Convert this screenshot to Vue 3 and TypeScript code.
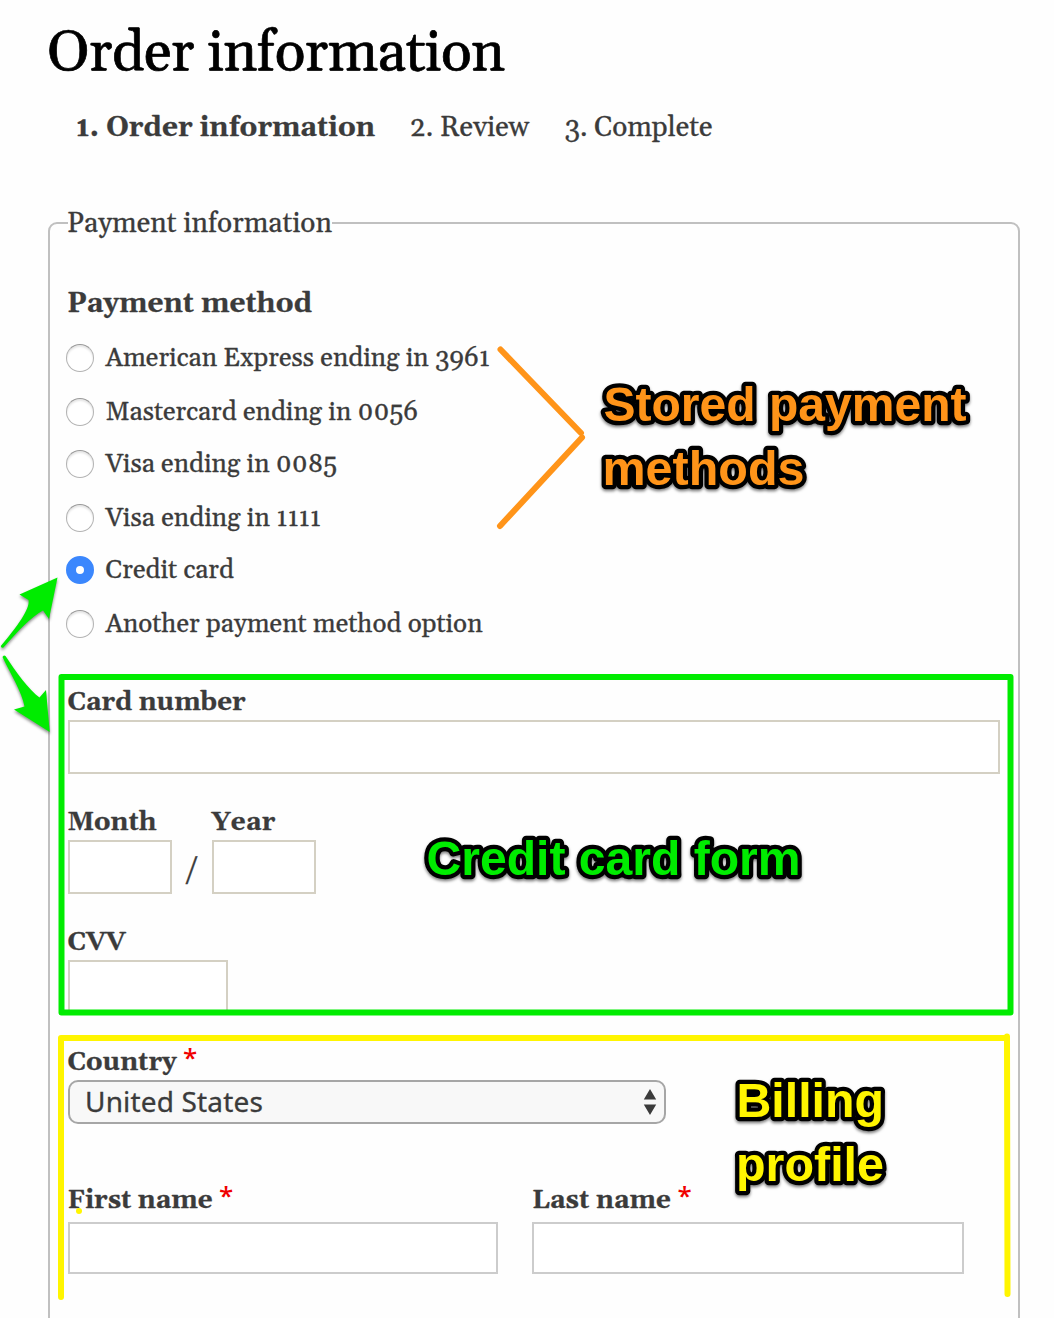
<script setup lang="ts">
import type { Directive } from 'vue'

interface Step { label: string; width: number; active?: boolean }
interface Method { label: string; width: number; checked?: boolean }

const steps: Step[] = [
  { label: '1. Order information', width: 299, active: true },
  { label: '2. Review', width: 119.5 },
  { label: '3. Complete', width: 148 },
]

const methods: Method[] = [
  { label: 'American Express ending in 3961', width: 384.5 },
  { label: 'Mastercard ending in 0056', width: 312.5 },
  { label: 'Visa ending in 0085', width: 231.5 },
  { label: 'Visa ending in 1111', width: 215.5 },
  { label: 'Credit card', width: 128.5, checked: true },
  { label: 'Another payment method option', width: 377 },
]

// Tracks a run of text out (or in) until it has the given width.
const vFit: Directive<HTMLElement, number> = {
  mounted(el, { value }) {
    const natural = el.getBoundingClientRect().width
    const count = (el.textContent ?? '').length
    el.style.letterSpacing = `${(value - natural) / count}px`
  },
}
</script>

<template>
  <main class="page">
    <h1><span v-fit="457.5">Order information</span></h1>
    <nav class="steps">
      <span v-for="s in steps" :key="s.label" v-fit="s.width" :class="{ active: s.active }">{{ s.label }}</span>
    </nav>

    <section class="fieldset">
      <div class="legend"><span v-fit="265">Payment information</span></div>
      <h2><span v-fit="245">Payment method</span></h2>
      <div class="methods">
        <label v-for="m in methods" :key="m.label" class="method">
          <i class="radio" :class="{ on: m.checked }"></i>
          <span v-fit="m.width">{{ m.label }}</span>
        </label>
      </div>

      <div class="field">
        <div class="label"><span v-fit="178">Card number</span></div>
        <div class="box number"></div>
      </div>
      <div class="row expiry">
        <div class="field">
          <div class="label"><span v-fit="89">Month</span></div>
          <div class="box short"></div>
        </div>
        <div class="slash"><span>/</span></div>
        <div class="field">
          <div class="label"><span v-fit="64">Year</span></div>
          <div class="box short"></div>
        </div>
      </div>
      <div class="field">
        <div class="label"><span v-fit="58">CVV</span></div>
        <div class="box cvv"></div>
      </div>

      <div class="field country">
        <div class="label"><span v-fit="109">Country</span><b class="req">*</b></div>
        <div class="select">
          <span v-fit="178">United States</span>
          <svg width="14" height="26" viewBox="0 0 14 26"><path d="M7 0l6.200 10.500H.8zM7 26l6.200-10.500H.8z" fill="#3b3b3b" /></svg>
        </div>
      </div>
      <div class="row names">
        <div class="field first">
          <div class="label"><span v-fit="145">First name</span><b class="req">*</b></div>
          <div class="box grey"></div>
        </div>
        <div class="field last">
          <div class="label"><span v-fit="139">Last name</span><b class="req">*</b></div>
          <div class="box grey"></div>
        </div>
      </div>
    </section>

    <svg class="notes" width="1054" height="1318" viewBox="0 0 1054 1318">
      <g fill="none" stroke-width="6" stroke-linecap="round" stroke-linejoin="round">
        <path d="M500.500 349.500L581 433M582 437.500L500 526" stroke="#ff9419" />
        <path d="M61.500 677H1010.500V1012.500H61.500Z" stroke="#00ec00" />
        <path d="M61 1297V1038H1006M1007 1036.500L1007.500 1294" stroke="#fff500" />
      </g>
      <circle cx="79" cy="1211" r="3" fill="#fff500" />
      <g class="arrows" fill="#00ec00">
        <path d="M57.500 577.500L19.500 594.500L28.500 600C30 607 22 621 .8 646Q1 648.500 3.500 647.500C18 631 31 617 43 610.500L49 619Z" />
        <path d="M49.700 732L14 709.500L24.500 706.500C22 692 11 675 2.500 657Q3.500 654.500 5.500 656C16 672 29 690 39.500 697.500L46 690Z" />
      </g>
      <g class="callout">
        <text x="603.500" y="421" textLength="363" lengthAdjust="spacingAndGlyphs" fill="#ff9419">Stored payment</text>
        <text x="602.500" y="485" textLength="202" lengthAdjust="spacingAndGlyphs" fill="#ff9419">methods</text>
        <text x="426.500" y="875" textLength="374" lengthAdjust="spacingAndGlyphs" fill="#00ec00">Credit card form</text>
        <text x="736.500" y="1117" textLength="147.500" lengthAdjust="spacingAndGlyphs" fill="#fff500">Billing</text>
        <text x="736" y="1181" textLength="148" lengthAdjust="spacingAndGlyphs" fill="#fff500">profile</text>
      </g>
    </svg>
  </main>
</template>

<style>
body { margin: 0; background: #fefefe; }
</style>

<style scoped>
.page {
  position: relative;
  box-sizing: border-box;
  width: 1054px;
  height: 1318px;
  overflow: hidden;
  background: #fefefe;
  color: #3b3b3b;
  font-family: Georgia, Gelasio, "Liberation Serif", serif;
  -webkit-text-stroke: .3px currentColor;
  white-space: nowrap;
}
h1, h2 { margin: 0; }
h1 {
  box-sizing: border-box;
  padding: 3px 0 0 47px;
  height: 104px;
  line-height: 100px;
  font-size: 57px;
  font-weight: 400;
  color: #000;
  -webkit-text-stroke-width: .7px;
}
.steps {
  display: flex;
  gap: 35px;
  padding-left: 76px;
  height: 48px;
  line-height: 48px;
  font-size: 28px;
}
.active { font-weight: 700; }
.fieldset {
  box-sizing: border-box;
  width: 972px;
  height: 1120px;
  margin: 70px 0 0 48px;
  padding: 0 18px;
  border: 2px solid #c0c0c0;
  border-radius: 9px;
}
.legend {
  width: 264px;
  height: 32px;
  margin-top: -18px;
  line-height: 36px;
  font-size: 28px;
  background: #fefefe;
}
.legend span { margin-left: -1px; }
h2 {
  margin: 44px 0 0 -1px;
  height: 40px;
  line-height: 44px;
  font-size: 28px;
}
.methods { margin: 10px 0 32px -2px; }
.method {
  display: flex;
  align-items: center;
  gap: 11.500px;
  height: 52px;
  font-size: 26px;
  line-height: 54px;
}
.method > span { height: 52px; }
.method:nth-child(odd) { margin-bottom: 2px; }
.method:last-child { margin-bottom: 0; }
.radio {
  box-sizing: border-box;
  width: 28px;
  height: 28px;
  border-radius: 50%;
  border: 1.500px solid #b3b3b3;
  border-top-color: #999;
  background: #fff;
  box-shadow: inset 0 2px 2px #e6e6e6;
}
.radio.on {
  border: 10px solid #3b87fd;
  box-shadow: none;
}
.label {
  display: flex;
  height: 38px;
  margin-left: -.5px;
  line-height: 42px;
  font-size: 26px;
  font-weight: 700;
}
.req {
  margin-left: 6.500px;
  font: 600 26px/31px "Open Sans", sans-serif;
  color: #f00000;
  -webkit-text-stroke-width: 0;
}
.box {
  box-sizing: border-box;
  height: 54px;
  border: 2px solid #d4d0c3;
  background: #fff;
}
.number { width: 932px; }
.short { width: 104px; }
.cvv { width: 160px; }
.row { display: flex; }
.expiry { margin: 28px 0; }
.slash {
  width: 40px;
  padding-top: 49px;
  box-sizing: border-box;
  text-align: center;
  font-size: 28px;
  line-height: 38px;
}
.slash span {
  display: inline-block;
  transform: skewX(-7deg);
}
.country { margin-top: 28px; }
.select {
  box-sizing: border-box;
  display: flex;
  align-items: center;
  justify-content: space-between;
  width: 598px;
  height: 44px;
  padding: 0 7px 0 15px;
  border: 2px solid #a6a6a6;
  border-radius: 10px;
  background: #f8f8f8;
  font: 28px/38px "Noto Sans", sans-serif;
}
.select span { height: 40px; }
.names { gap: 34px; margin-top: 56px; }
.first { width: 430px; }
.last { width: 432px; }
.last .label { margin-left: 0; }
.grey {
  height: 52px;
  margin-top: 4px;
  border-color: #ccc;
}
.notes {
  position: absolute;
  left: 0;
  top: 0;
}
.arrows { filter: drop-shadow(0 2px 1.500px rgba(0, 0, 0, .45)); }
.callout {
  font: 700 48px "Liberation Sans", Arial, sans-serif;
  stroke: #000;
  stroke-width: 8.500px;
  stroke-linejoin: round;
  paint-order: stroke fill;
  filter: drop-shadow(0 2px 1.500px rgba(0, 0, 0, .5));
}
</style>
